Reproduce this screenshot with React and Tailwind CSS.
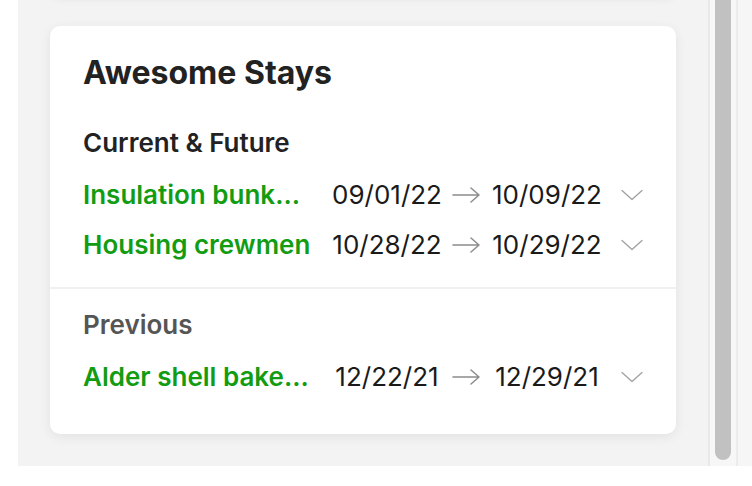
const current = [
  { name: "Insulation bunk...", from: "09/01/22", to: "10/09/22" },
  { name: "Housing crewmen", from: "10/28/22", to: "10/29/22" },
];

const previous = [{ name: "Alder shell bake...", from: "12/22/21", to: "12/29/21" }];

function Arrow() {
  return (
    <svg width="28" height="16" viewBox="0 0 28 16" fill="none" stroke="#8c8c8c" strokeWidth="1.5" strokeLinecap="round" strokeLinejoin="round">
      <path d="M1 8h26M19 1l8 7-8 7" />
    </svg>
  );
}

function Chevron() {
  return (
    <svg width="22" height="12" viewBox="0 0 22 12" fill="none" stroke="#a0a0a0" strokeWidth="1.3" strokeLinecap="round" strokeLinejoin="round">
      <path d="M1 1.5l10 9 10-9" />
    </svg>
  );
}

function StayRow({ stay }) {
  return (
    <div className="flex items-center h-[50px] text-[26px] leading-[32px]">
      <span className="w-[244px] font-semibold text-[#129c12] whitespace-nowrap">{stay.name}</span>
      <span className="w-[120px] text-center text-[#1a1a1a]">{stay.from}</span>
      <span className="w-[38px] flex justify-center">
        <Arrow />
      </span>
      <span className="w-[124px] text-center text-[#1a1a1a]">{stay.to}</span>
      <span className="ml-[12px] flex items-center">
        <Chevron />
      </span>
    </div>
  );
}

export default function App() {
  return (
    <div
      className="w-[752px] h-[486px] bg-white overflow-hidden flex flex-col"
      style={{ fontFamily: "Inter, 'Noto Sans', sans-serif" }}
    >
      <div className="flex h-[466px]">
        <div className="ml-[18px] w-[690px] bg-[#f3f3f3] overflow-hidden px-[32px]">
          <div className="h-[40px] -mt-[44px] bg-white rounded-[10px] shadow-[0_2px_10px_rgba(0,0,0,0.08)]" />
          <div className="mt-[30px] bg-white rounded-[10px] shadow-[0_3px_12px_rgba(0,0,0,0.07)] h-[408px] flex flex-col">
            <div className="px-[33px] pt-[29px]">
              <h2 className="text-[32px] leading-[36px] font-bold text-[#222]">Awesome Stays</h2>
              <h3 className="mt-[36px] text-[26px] leading-[32px] font-semibold text-[#222]">Current &amp; Future</h3>
              <div className="mt-[11px]">
                {current.map((s) => (
                  <StayRow key={s.name} stay={s} />
                ))}
              </div>
            </div>
            <div className="mt-[17px] h-[2px] bg-[#f0f0f0]" />
            <div className="px-[33px] pt-[20px]">
              <h3 className="text-[26px] leading-[32px] font-semibold text-[#555]">Previous</h3>
              <div className="mt-[11px]">
                {previous.map((s) => (
                  <StayRow key={s.name} stay={s} />
                ))}
              </div>
            </div>
          </div>
        </div>
        <div className="w-[2px] bg-[#e9e9e9]" />
        <div className="w-[26px] bg-[#f7f7f7] flex justify-center">
          <div className="w-[16px] h-[460px] bg-[#c1c1c1] rounded-b-full" />
        </div>
        <div className="w-[2px] bg-[#ececec]" />
        <div className="flex-1 bg-[#f6f6f6]" />
      </div>
    </div>
  );
}
